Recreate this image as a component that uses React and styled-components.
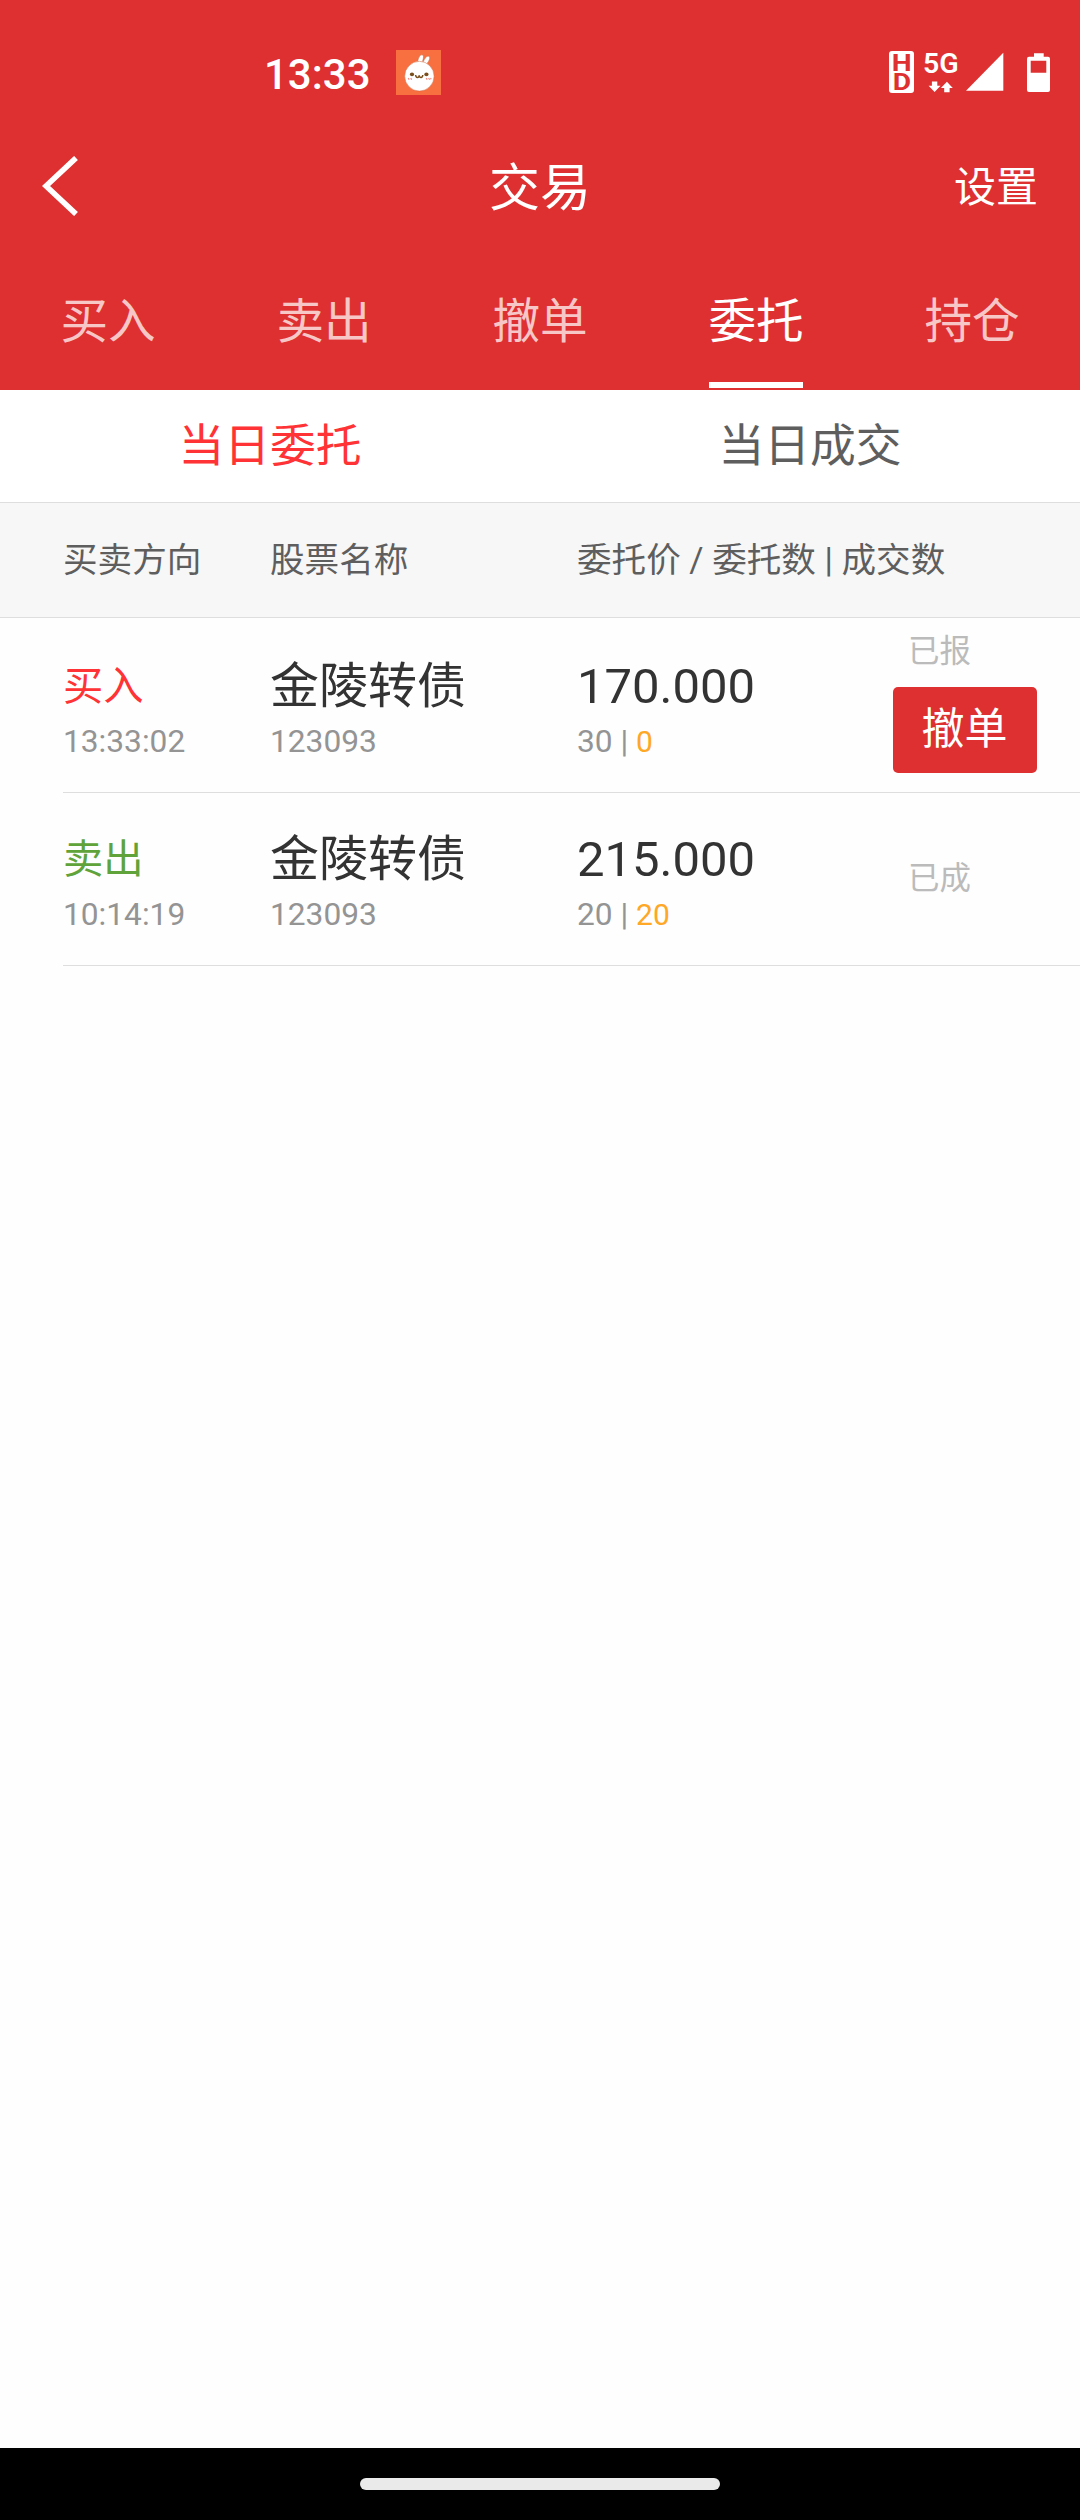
import React, { PureComponent } from 'react'
import styled, { createGlobalStyle } from 'styled-components'

const GlobalStyle = createGlobalStyle`
  body {
    margin: 0;
    background: #fff;
    font-family: Roboto, 'Noto Sans CJK SC', sans-serif;
  }
`

const PageWrapper = styled.div`
  width: 1080px;
  height: 2520px;
  display: flex;
  flex-direction: column;
  background: #fefefe;
  overflow: hidden;
`

const Header = styled.header`
  height: 390px;
  background: #de3031;
  color: white;
`

const StatusBar = styled.div`
  height: 123px;
  box-sizing: border-box;
  padding: 50px 30px 0 264px;
  display: flex;
  align-items: flex-start;
`

const Clock = styled.div`
  width: 132px;
  font-size: 42px;
  font-weight: 500;
  line-height: 49px;
`

const StatusIcons = styled.div`
  display: flex;
  margin-left: auto;

  svg {
    display: block;
  }
`

const HdBadge = styled.div`
  width: 25px;
  height: 42px;
  margin-top: 1px;
  padding: 2px 0;
  box-sizing: border-box;
  display: flex;
  flex-direction: column;
  align-items: center;
  border-radius: 3px;
  background: #fff;
  color: #de3031;
  font-size: 24.5px;
  font-weight: 700;
  line-height: 19px;

  > span {
    transform: scaleX(1.15);
  }
`

const Network = styled.div`
  width: 43px;
  padding-left: 9px;
  font-size: 28.5px;
  font-weight: 600;
  line-height: 27px;

  svg {
    margin: 4px 0 0 5px;
  }
`

const NavBar = styled.div`
  height: 126px;
  display: grid;
  grid-template-columns: 1fr auto 1fr;
  align-items: center;
  padding: 0 42px;
`

const BackButton = styled.div`
  height: 60px;

  svg {
    display: block;
  }
`

const NavTitle = styled.div`
  font-size: 51px;
  line-height: 60px;
  padding-top: 5px;
`

const NavAction = styled.div`
  font-size: 42px;
  line-height: 60px;
  text-align: right;
  padding-top: 3px;
`

const Tabs = styled.div`
  height: 141px;
  display: flex;
`

const Tab = styled.div`
  flex: 1;
  display: flex;
  flex-direction: column;
  align-items: center;
  justify-content: space-between;
  font-size: 47.6px;
  line-height: 60px;
  padding: 43px 0 2px;
  box-sizing: border-box;
  color: ${({ $active }) => ($active ? '#fff' : '#f7c7c7')};

  &::after {
    content: '';
    width: 94px;
    height: 6px;
    background: ${({ $active }) => ($active ? '#fff' : 'transparent')};
  }
`

const SubTabs = styled.div`
  height: 112px;
  display: flex;
  background: #fff;
  border-bottom: 1px solid #dedede;
`

const SubTab = styled.div`
  flex: 1;
  text-align: center;
  font-size: 45.8px;
  line-height: 113px;
  color: ${({ $active }) => ($active ? '#ff3336' : '#5e5e5e')};
`

const columns = `
  display: grid;
  grid-template-columns: 207px 307px 1fr;
`

const TableHead = styled.div`
  ${columns}
  height: 114px;
  padding-left: 63px;
  background: #f7f7f7;
  border-bottom: 1px solid #dedede;
  font-size: 34.6px;
  line-height: 114px;
  color: #5e5e5e;
`

const OrderList = styled.div`
  padding: 2px 0 0 63px;
`

const OrderRow = styled.div`
  ${columns}
  grid-template-columns: 207px 307px 316px 1fr;
  height: 172px;
  border-bottom: 1px solid #dedede;
`

const Cell = styled.div`
  padding-top: 36px;
`

const Side = styled.div`
  font-size: 40.3px;
  line-height: 62px;
  color: ${({ $side }) => ($side === 'buy' ? '#ff3336' : '#5fa33a')};
`

const Main = styled.div`
  font-size: 49px;
  line-height: 62px;
  color: #333;
`

const Sub = styled.div`
  font-size: 31.7px;
  line-height: 48px;
  color: #949494;
  white-space: pre;

  > span {
    font-size: 30px;
    color: #ffa726;
  }
`

const StatusCell = styled.div`
  width: 144px;
  display: flex;
  flex-direction: column;
  justify-content: center;
`

const StatusText = styled.div`
  font-size: 31.5px;
  line-height: 48px;
  padding-left: 15px;
  color: #bbb;
`

const CancelButton = styled.button`
  width: 144px;
  height: 86px;
  margin: 11px 0;
  padding: 0 1px 2px 0;
  border: 0;
  border-radius: 5px;
  background: #de3031;
  color: white;
  font-family: inherit;
  font-size: 43px;
  line-height: 84px;
`

const GestureBar = styled.div`
  height: 72px;
  margin-top: auto;
  display: flex;
  align-items: center;
  justify-content: center;
  background: #000;

  &::before {
    content: '';
    width: 360px;
    height: 12px;
    border-radius: 6px;
    background: #eaeaea;
  }
`

const tabs = ['买入', '卖出', '撤单', '委托', '持仓']

const subTabs = ['当日委托', '当日成交']

const orders = [
  {
    side: 'buy',
    sideName: '买入',
    time: '13:33:02',
    name: '金陵转债',
    code: '123093',
    price: '170.000',
    amount: 30,
    filled: 0,
    status: '已报',
    cancelable: true
  },
  {
    side: 'sell',
    sideName: '卖出',
    time: '10:14:19',
    name: '金陵转债',
    code: '123093',
    price: '215.000',
    amount: 20,
    filled: 20,
    status: '已成',
    cancelable: false
  }
]

const RabbitIcon = () => (
  <svg width='45' height='45' viewBox='0 0 45 45'>
    <rect width='45' height='45' fill='#f86f40' />
    <g fill='#fff' stroke='#c9683f' strokeWidth='0.5'>
      <ellipse cx='24.6' cy='9.5' rx='2.4' ry='5' transform='rotate(18 24.6 9.5)' />
      <ellipse cx='30.4' cy='10.5' rx='2.3' ry='5' transform='rotate(30 30.4 10.5)' />
      <ellipse cx='23.4' cy='26.2' rx='14.7' ry='14.9' />
    </g>
    <g fill='#7a4f1d'>
      <ellipse cx='16' cy='24.4' rx='2.1' ry='1.8' />
      <ellipse cx='30.4' cy='24.4' rx='2.1' ry='1.8' />
      <path d='M13.8 23.2l2 .4v.8z' />
      <path d='M32.6 23.2l-2 .4v.8z' />
    </g>
    <path d='M19.6 25c.3 3.2 3.300 3.200 3.600.2.300 3 3.400 3 3.600-.2' fill='none' stroke='#7a4f1d' strokeWidth='1.5' />
    <path
      d='M12.200 28l1 1.800M14.800 28l.8 1.800M30.200 28l1 1.800M32.600 28l1 1.800M35 28l-.4 1.400'
      stroke='#f58a80'
      strokeWidth='1.2'
    />
  </svg>
)

const TrafficIcon = () => (
  <svg width='25' height='12' viewBox='0 0 25 12' fill='#fff'>
    <path d='M3.900 0.500h5.400v4.300h3.200l-5.900 6.200-6-6.200h3.300z' />
    <path d='M16.200 11.200h5.400v-4.300h3.200l-5.900-6.200-6 6.200h3.300z' />
  </svg>
)

const SignalBatteryIcon = () => (
  <svg width='84' height='44' viewBox='77 0 84 44' fill='#fff'>
    <path d='M114.300 2.700v38H77z' />
    <path
      fillRule='evenodd'
      d='M145 3.200h9.700v3.600h4.300a2 2 0 0 1 2 2V40a2 2 0 0 1-2 2h-19a2 2 0 0 1-2-2V8.800a2 2 0 0 1 2-2h5zM141.700 10.800v12h15.600v-12z'
    />
  </svg>
)

export default class App extends PureComponent {
  state = {
    activeTab: 3,
    activeSubTab: 0
  }

  handleTabClick = idx => () => {
    this.setState({ activeTab: idx })
  }

  handleSubTabClick = idx => () => {
    this.setState({ activeSubTab: idx })
  }

  headerContent = () => (
    <Header>
      <StatusBar>
        <Clock>13:33</Clock>
        <RabbitIcon />
        <StatusIcons>
          <HdBadge>
            <span>H</span>
            <span>D</span>
          </HdBadge>
          <Network>
            5G
            <TrafficIcon />
          </Network>
          <SignalBatteryIcon />
        </StatusIcons>
      </StatusBar>
      <NavBar>
        <BackButton>
          <svg width='38' height='60' viewBox='0 0 38 60'>
            <path d='M34 2L4 30l30 28' fill='none' stroke='#fff' strokeWidth='5.6' />
          </svg>
        </BackButton>
        <NavTitle>交易</NavTitle>
        <NavAction>设置</NavAction>
      </NavBar>
      <Tabs>
        {tabs.map((tab, idx) => (
          <Tab key={tab} $active={this.state.activeTab === idx} onClick={this.handleTabClick(idx)}>
            {tab}
          </Tab>
        ))}
      </Tabs>
    </Header>
  )

  ordersContent = () => (
    <OrderList>
      {orders.map((order, idx) => (
        <OrderRow key={idx}>
          <Cell>
            <Side $side={order.side}>{order.sideName}</Side>
            <Sub>{order.time}</Sub>
          </Cell>
          <Cell>
            <Main>{order.name}</Main>
            <Sub>{order.code}</Sub>
          </Cell>
          <Cell>
            <Main>{order.price}</Main>
            <Sub>
              {order.amount} | <span>{order.filled}</span>
            </Sub>
          </Cell>
          <StatusCell>
            <StatusText>{order.status}</StatusText>
            {order.cancelable && <CancelButton>撤单</CancelButton>}
          </StatusCell>
        </OrderRow>
      ))}
    </OrderList>
  )

  render() {
    return (
      <PageWrapper>
        <GlobalStyle />
        {this.headerContent()}
        <SubTabs>
          {subTabs.map((tab, idx) => (
            <SubTab key={tab} $active={this.state.activeSubTab === idx} onClick={this.handleSubTabClick(idx)}>
              {tab}
            </SubTab>
          ))}
        </SubTabs>
        <TableHead>
          <div>买卖方向</div>
          <div>股票名称</div>
          <div>委托价 / 委托数 | 成交数</div>
        </TableHead>
        {this.ordersContent()}
        <GestureBar />
      </PageWrapper>
    )
  }
}
